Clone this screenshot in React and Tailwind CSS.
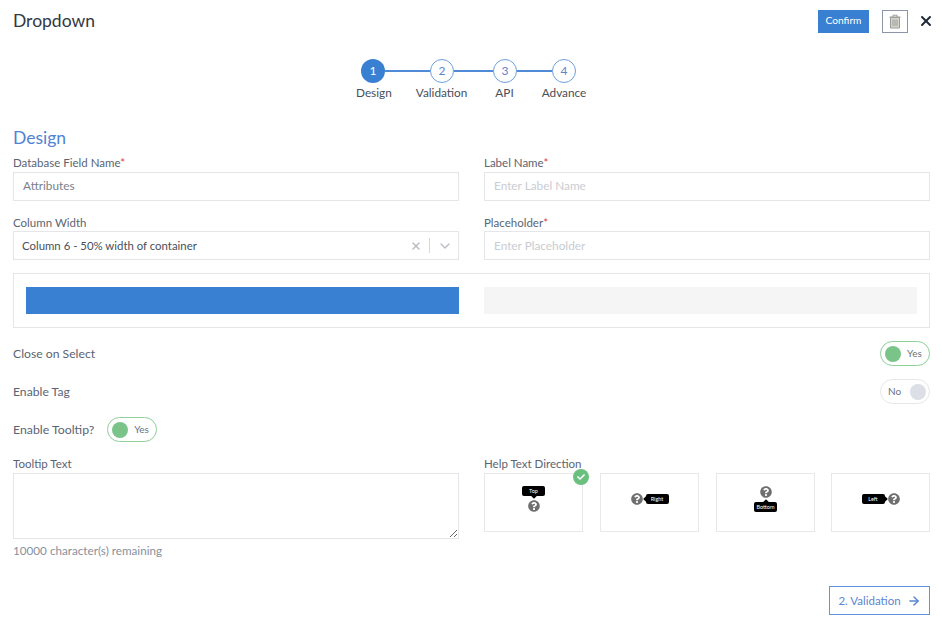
import { FaQuestionCircle, FaCheck } from 'react-icons/fa';
import { X, ChevronDown, ArrowRight } from 'lucide-react';

const steps = [
  { n: 1, label: 'Design', active: true },
  { n: 2, label: 'Validation' },
  { n: 3, label: 'API' },
  { n: 4, label: 'Advance' },
];

const Label = ({ text, required }) => (
  <div className="h-[18px] text-[11.5px] leading-[20px] text-[#5b6472]">
    {text}
    {required && <span className="text-[#e0404f]">*</span>}
  </div>
);

const Field = ({ label, placeholder, dark, tight }) => (
  <div>
    <Label text={label} required />
    <input
      placeholder={placeholder}
      className={`block h-[29px] w-full border border-[#e4e6ea] px-[9px] text-[11.8px] outline-none ${tight ? '' : 'mt-[1px] pb-[2px]'} ${dark ? 'placeholder:text-[#7b8087]' : 'placeholder:text-[#c9ccd2]'}`}
    />
  </div>
);

const Toggle = ({ on }) =>
  on ? (
    <div className="flex h-[25px] w-[50px] items-center rounded-full border border-[#8fd09b] pl-[4px]">
      <div className="h-[16px] w-[16px] rounded-full bg-[#7ac48a]" />
      <span className="ml-[6px] text-[10px] text-[#6b7280]">Yes</span>
    </div>
  ) : (
    <div className="flex h-[25px] w-[50px] items-center justify-between rounded-full border border-[#e6e7ea] pl-[7px] pr-[3px]">
      <span className="text-[10px] text-[#6b7280]">No</span>
      <div className="h-[16px] w-[16px] rounded-full bg-[#dcdfe5]" />
    </div>
  );

const Tip = ({ text, arrow }) => (
  <div className="relative flex h-[10px] w-[23px] items-center justify-center rounded-[2px] bg-black text-[5.5px] text-white">
    {text}
    {arrow === 'down' && <div className="absolute bottom-[-2px] left-[10px] h-[4px] w-[4px] rotate-45 bg-black" />}
    {arrow === 'up' && <div className="absolute left-[10px] top-[-2px] h-[4px] w-[4px] rotate-45 bg-black" />}
    {arrow === 'left' && <div className="absolute left-[-2px] top-[3px] h-[4px] w-[4px] rotate-45 bg-black" />}
    {arrow === 'right' && <div className="absolute right-[-2px] top-[3px] h-[4px] w-[4px] rotate-45 bg-black" />}
  </div>
);

const Help = () => <FaQuestionCircle className="h-[12px] w-[12px] text-[#6f6f6f]" />;

const DirectionCard = ({ children, selected, className }) => (
  <div className={`relative flex h-[59px] w-[99px] items-center justify-center border border-[#e8e8ea] pb-[7px] ${className}`}>
    {selected && (
      <div className="absolute right-[-7px] top-[-5px] flex h-[16px] w-[16px] items-center justify-center rounded-full bg-[#6cc07f]">
        <FaCheck className="h-[8px] w-[8px] text-white" />
      </div>
    )}
    {children}
  </div>
);

const App = () => {
  return (
    <div className="h-[625px] w-[942px] overflow-hidden bg-white pl-[13px] pr-[12px] font-['Lato',sans-serif]">
      {/* header */}
      <div className="flex h-[42px] items-center">
        <h1 className="text-[17.5px] text-[#33383f]">Dropdown</h1>
        <button className="ml-auto h-[23px] w-[51px] bg-[#3a80d2] text-[10.2px] text-white">Confirm</button>
        <button className="ml-[13px] flex h-[23px] w-[26px] items-center justify-center border border-[#8d96a6]">
          <svg width="12" height="15" viewBox="0 0 12 15" fill="none" stroke="#9a9c9c" strokeWidth="1">
            <path d="M0.5 3h11M4 3V1.2h4V3" />
            <path d="M1.5 3.5h9V14h-9z" fill="#d8d3c8" />
            <path d="M4 5.5V12M6 5.5V12M8 5.5V12" />
          </svg>
        </button>
        <X className="ml-[10px] mr-[-4px] h-[16px] w-[16px] text-[#222b38]" strokeWidth={3} />
      </div>

      {/* stepper */}
      <div className="mx-auto mt-[17px] w-[231px]">
        <div className="flex items-center pl-[5px]">
          <div className="flex h-6 w-6 items-center justify-center rounded-full bg-[#3a80d2] text-[12px] text-white">1</div>
          <div className="h-[2px] w-[45px] bg-[#4f8bd6]" />
          <div className="flex h-6 w-6 items-center justify-center rounded-full border border-[#6d9fdc] text-[12px] text-[#5d86c9]">2</div>
          <div className="h-[2px] w-[39px] bg-[#4f8bd6]" />
          <div className="flex h-6 w-6 items-center justify-center rounded-full border border-[#6d9fdc] text-[12px] text-[#5d86c9]">3</div>
          <div className="h-[2px] w-[35px] bg-[#4f8bd6]" />
          <div className="flex h-6 w-6 items-center justify-center rounded-full border border-[#6d9fdc] text-[12px] text-[#5d86c9]">4</div>
        </div>
        <div className="mt-[1px] flex text-[11.8px] leading-[18px] text-[#4a4f57]">
          {steps.map((s, i) => (
            <span key={s.n} className={i === 0 ? '' : i === 1 ? 'ml-[24px]' : 'ml-[28px]'}>
              {s.label}
            </span>
          ))}
        </div>
      </div>

      <h2 className="mt-[24px] text-[17.5px] leading-[24px] text-[#4f83d6]">Design</h2>

      {/* fields */}
      <div className="mt-[3px] grid grid-cols-2 gap-x-[25px] gap-y-[12px]">
        <Field label="Database Field Name" placeholder="Attributes" dark />
        <Field label="Label Name" placeholder="Enter Label Name" />
        <div>
          <Label text="Column Width" />
          <div className="flex h-[29px] items-center border border-[#e4e6ea] pl-[8px] pr-[5px] text-[11.4px] text-[#4a4f57]">
            <span>Column 6 - 50% width of container</span>
            <X className="ml-auto h-[12px] w-[12px] text-[#b9bcc2]" strokeWidth={3} />
            <div className="mx-[7px] h-[15px] w-px bg-[#d5d7db]" />
            <ChevronDown className="h-[16px] w-[16px] text-[#b9bcc2]" strokeWidth={2} />
          </div>
        </div>
        <Field label="Placeholder" placeholder="Enter Placeholder" tight />
      </div>

      {/* colour preview */}
      <div className="mt-[13px] grid h-[55px] grid-cols-2 items-center gap-x-[25px] border border-[#e4e6ea] pl-[12px] pr-[12px]">
        <div className="h-[27px] bg-[#3a80d2]" />
        <div className="h-[27px] bg-[#f5f5f6]" />
      </div>

      {/* toggles */}
      <div className="mt-[13px] flex h-[25px] items-center justify-between text-[12.2px] text-[#5b6472]">
        <span className="pt-[2px]">Close on Select</span>
        <Toggle on />
      </div>
      <div className="mt-[13px] flex h-[25px] items-center justify-between text-[12.2px] text-[#5b6472]">
        <span className="pt-[2px]">Enable Tag</span>
        <Toggle />
      </div>
      <div className="mt-[13px] flex h-[25px] items-center gap-[13px] text-[12.3px] text-[#5b6472]">
        <span className="pt-[2px]">Enable Tooltip?</span>
        <Toggle on />
      </div>

      {/* tooltip */}
      <div className="mt-[12px] grid grid-cols-2 gap-x-[25px]">
        <div>
          <Label text="Tooltip Text" />
          <textarea className="mt-[1px] block h-[66px] w-full border border-[#e4e6ea] outline-none" />
          <div className="mt-[2px] text-[11.7px] leading-[18px] text-[#87909c]">10000 character(s) remaining</div>
        </div>
        <div>
          <Label text="Help Text Direction" />
          <div className="mt-[1px] flex">
            <DirectionCard selected>
              <div className="flex flex-col items-center gap-[4px]">
                <Tip text="Top" arrow="down" />
                <Help />
              </div>
            </DirectionCard>
            <DirectionCard className="ml-[17px]">
              <div className="flex items-center gap-[3px]">
                <Help />
                <Tip text="Right" arrow="left" />
              </div>
            </DirectionCard>
            <DirectionCard className="ml-[17px]">
              <div className="flex flex-col items-center gap-[4px]">
                <Help />
                <Tip text="Bottom" arrow="up" />
              </div>
            </DirectionCard>
            <DirectionCard className="ml-[16px]">
              <div className="flex items-center gap-[3px]">
                <Tip text="Left" arrow="right" />
                <Help />
              </div>
            </DirectionCard>
          </div>
        </div>
      </div>

      <div className="mt-[27px] flex justify-end">
        <button className="flex h-[29px] w-[101px] items-center justify-center gap-[6px] border border-[#5f95dc] text-[11.5px] text-[#5b85cf]">
          2. Validation
          <ArrowRight className="h-[14px] w-[14px]" strokeWidth={2.5} />
        </button>
      </div>
    </div>
  );
};

export default App;
